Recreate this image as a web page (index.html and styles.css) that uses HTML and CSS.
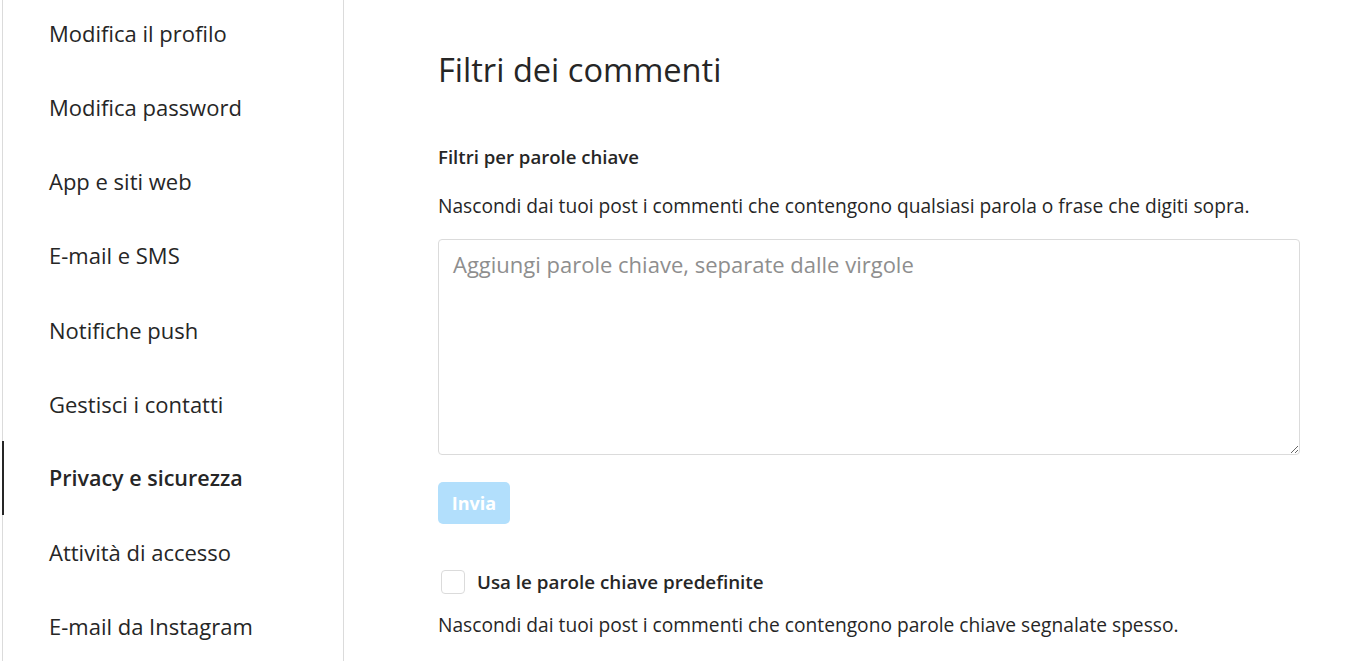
FILE: index.html
```html
<!DOCTYPE html>
<html lang="it">
<head>
  <meta charset="UTF-8" />
  <title>Filtri dei commenti</title>
  <link rel="stylesheet" href="styles.css">
</head>
<body>
  <div class="page">
    <nav class="sidebar">
      <a class="nav-item" href="#">Modifica il profilo</a>
      <a class="nav-item" href="#">Modifica password</a>
      <a class="nav-item" href="#">App e siti web</a>
      <a class="nav-item" href="#">E-mail e SMS</a>
      <a class="nav-item" href="#">Notifiche push</a>
      <a class="nav-item" href="#">Gestisci i contatti</a>
      <a class="nav-item active" href="#">Privacy e sicurezza</a>
      <a class="nav-item" href="#">Attività di accesso</a>
      <a class="nav-item" href="#">E-mail da Instagram</a>
    </nav>

    <main class="content">
      <h1>Filtri dei commenti</h1>

      <section class="filter">
        <h2>Filtri per parole chiave</h2>
        <p class="desc">Nascondi dai tuoi post i commenti che contengono qualsiasi parola o frase che digiti sopra.</p>
        <textarea class="keywords" placeholder="Aggiungi parole chiave, separate dalle virgole"></textarea>
        <button class="send" type="button" disabled>Invia</button>
      </section>

      <section class="filter default">
        <label class="check">
          <span class="box"></span>
          <span>Usa le parole chiave predefinite</span>
        </label>
        <p class="desc">Nascondi dai tuoi post i commenti che contengono parole chiave segnalate spesso.</p>
      </section>
    </main>
  </div>
</body>
</html>
```

FILE: styles.css
```css
body {
  margin: 0;
  font-family: 'Open Sans', 'Noto Sans', sans-serif;
  color: #262626;
  background: #fff;
  overflow: hidden;
}
.page {
  display: flex;
  height: 661px;
}
.sidebar {
  width: 340px;
  margin-left: 2px;
  border-left: 1px solid #dbdbdb;
  border-right: 1px solid #dbdbdb;
  display: flex;
  flex-direction: column;
  margin-top: -4px;
}
.nav-item {
  display: block;
  flex: none;
  height: 74.15px;
  line-height: 74px;
  padding-left: 45px;
  font-size: 22px;
  color: #262626;
  text-decoration: none;
  border-left: 2px solid transparent;
  margin-left: -1px;
  white-space: nowrap;
}
.nav-item.active {
  border-left-color: #262626;
  font-weight: 600;
  font-size: 21.5px;
}
.content {
  flex: 1;
  padding: 48px 46px 0 94px;
}
h1 {
  margin: 0 0 54px;
  font-size: 32.6px;
  font-weight: 400;
  line-height: 44px;
}
h2 {
  margin: 0;
  font-size: 18.6px;
  font-weight: 600;
  line-height: 22px;
}
.desc {
  margin: 27px 0 0;
  font-size: 19.2px;
  line-height: 22px;
  white-space: nowrap;
}
.keywords {
  display: block;
  box-sizing: border-box;
  width: 862px;
  height: 216px;
  margin-top: 22px;
  padding: 9px 14px;
  border: 1px solid #dbdbdb;
  border-radius: 4px;
  font-family: inherit;
  font-size: 22px;
  color: #262626;
  resize: vertical;
}
.keywords::placeholder {
  color: #8e8e8e;
}
.send {
  display: block;
  margin-top: 27px;
  width: 72px;
  height: 42px;
  border: none;
  border-radius: 5px;
  background: #b2dffc;
  color: #fff;
  font-family: inherit;
  font-size: 18px;
  font-weight: 700;
}
.default {
  margin-top: 46px;
}
.check {
  display: flex;
  align-items: center;
  gap: 12px;
  font-size: 18.8px;
  font-weight: 600;
  line-height: 24px;
  padding-left: 3px;
}
.box {
  width: 22px;
  height: 22px;
  border: 1px solid #dbdbdb;
  border-radius: 4px;
}
.default .desc {
  margin-top: 20px;
}
```
